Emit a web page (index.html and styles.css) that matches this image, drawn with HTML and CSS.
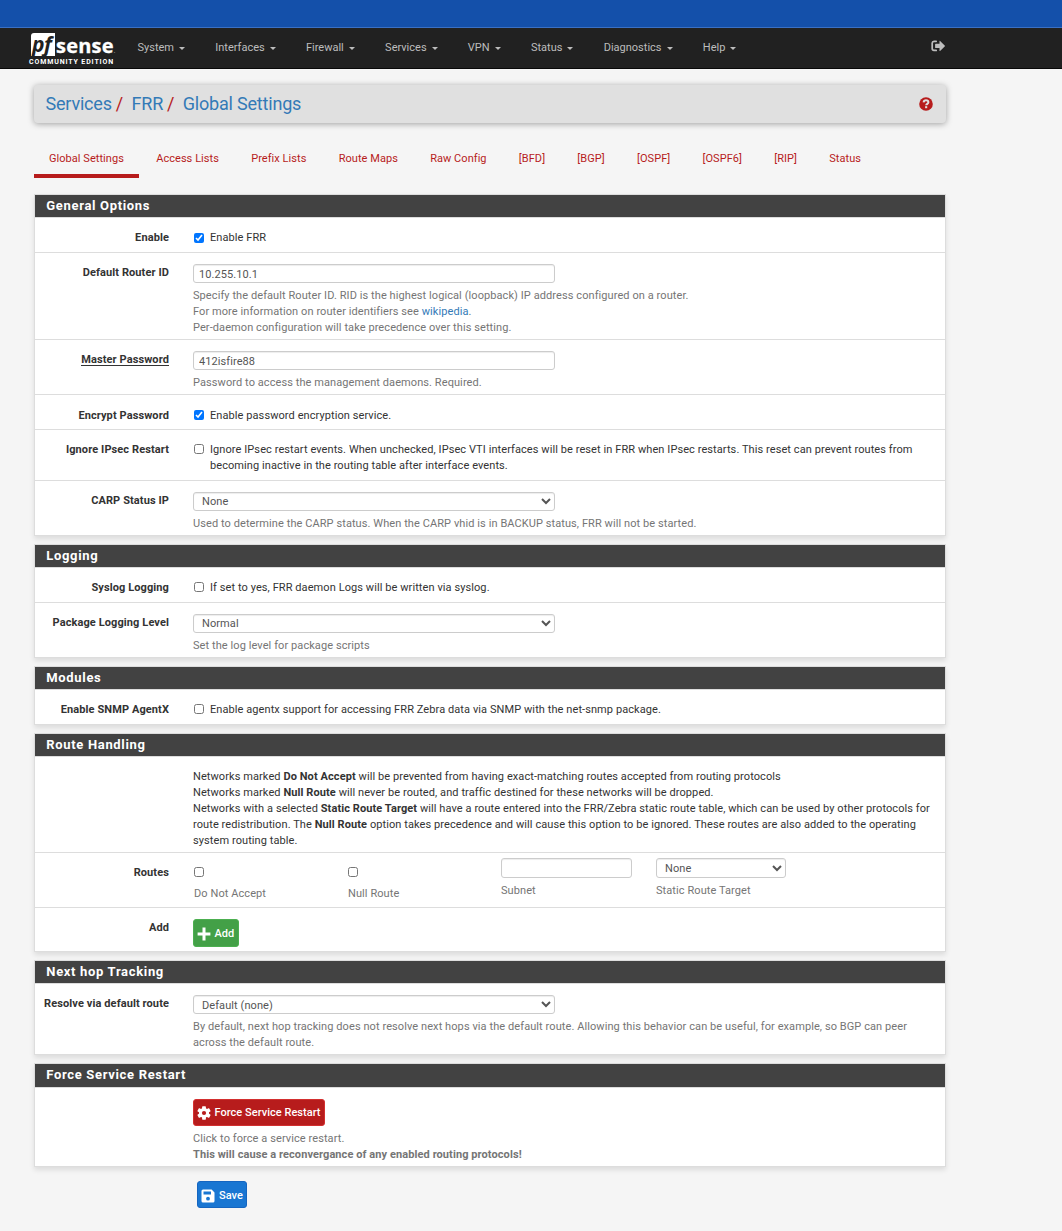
FILE: index.html
```html
<!DOCTYPE html>
<html lang="en">
<head>
<meta charset="utf-8">
<title>Services: FRR: Global Settings</title>
<link rel="stylesheet" href="styles.css">
</head>
<body>
<div class="banner"></div>
<nav class="navbar">
  <div class="brand">
    <div class="brand-name"><span class="brand-box">pf</span><span class="brand-word">sense</span><span class="brand-dot">.</span></div>
    <div class="brand-edition">COMMUNITY EDITION</div>
  </div>
  <ul class="menu">
    <li>System<i class="caret"></i></li>
    <li>Interfaces<i class="caret"></i></li>
    <li>Firewall<i class="caret"></i></li>
    <li>Services<i class="caret"></i></li>
    <li>VPN<i class="caret"></i></li>
    <li>Status<i class="caret"></i></li>
    <li>Diagnostics<i class="caret"></i></li>
    <li>Help<i class="caret"></i></li>
  </ul>
  <svg class="logout" viewBox="0 0 14 12" width="14" height="12"><path d="M5.2 1.3H3A1.8 1.8 0 0 0 1.2 3v5.6A1.8 1.8 0 0 0 3 10.4h2.2" fill="none" stroke="currentColor" stroke-width="1.7" stroke-linecap="round"/><path d="M4.7 3.8h3.8V1.1q0-.7.6-.2l4.6 4.5q.5.5 0 1L9.1 10.9q-.6.5-.6-.2V8H4.7q-.6 0-.6-.6v-3q0-.6.6-.6z" fill="currentColor"/></svg>
</nav>

<main class="container">
  <header class="page-head">
    <div class="crumbs"><a>Services</a><b>/</b><a>FRR</a><b>/</b><a>Global Settings</a></div>
    <svg class="help-icon" viewBox="0 0 14 14" width="14" height="14"><circle cx="7" cy="7" r="6.8" fill="#b71c1c"/><path d="M4.6 5.3C4.8 3.9 5.7 3.3 7 3.3c1.4 0 2.4.8 2.4 2 0 1.5-2.2 1.5-2.2 3" fill="none" stroke="#e0e0e0" stroke-width="2"/><rect x="6.1" y="9.2" width="2.1" height="2" fill="#e0e0e0"/></svg>
  </header>

  <ul class="tabs">
    <li class="active">Global Settings</li><li>Access Lists</li><li>Prefix Lists</li><li>Route Maps</li><li>Raw Config</li><li>[BFD]</li><li>[BGP]</li><li>[OSPF]</li><li>[OSPF6]</li><li>[RIP]</li><li>Status</li>
  </ul>

  <section class="panel">
    <h2>General Options</h2>
    <div class="row h35 first"><label>Enable</label><div class="field"><div class="check"><input type="checkbox" checked><span>Enable FRR</span></div></div></div>
    <div class="row h87"><label>Default Router ID</label><div class="field"><input class="control" type="text" value="10.255.10.1">
      <p class="hint">Specify the default Router ID. RID is the highest logical (loopback) IP address configured on a router.<br>For more information on router identifiers see <a>wikipedia</a>.<br>Per-daemon configuration will take precedence over this setting.</p></div></div>
    <div class="row h55"><label><span class="required">Master Password</span></label><div class="field"><input class="control" type="text" value="412isfire88">
      <p class="hint">Password to access the management daemons. Required.</p></div></div>
    <div class="row h35 low"><label>Encrypt Password</label><div class="field"><div class="check"><input type="checkbox" checked><span>Enable password encryption service.</span></div></div></div>
    <div class="row h51"><label>Ignore IPsec Restart</label><div class="field"><div class="check"><input type="checkbox"><span>Ignore IPsec restart events. When unchecked, IPsec VTI interfaces will be reset in FRR when IPsec restarts. This reset can prevent routes from<br>becoming inactive in the routing table after interface events.</span></div></div></div>
    <div class="row h54"><label>CARP Status IP</label><div class="field"><select class="control"><option>None</option></select>
      <p class="hint">Used to determine the CARP status. When the CARP vhid is in BACKUP status, FRR will not be started.</p></div></div>
  </section>

  <section class="panel">
    <h2>Logging</h2>
    <div class="row h35"><label>Syslog Logging</label><div class="field"><div class="check"><input type="checkbox"><span>If set to yes, FRR daemon Logs will be written via syslog.</span></div></div></div>
    <div class="row h54"><label>Package Logging Level</label><div class="field"><select class="control"><option>Normal</option></select>
      <p class="hint">Set the log level for package scripts</p></div></div>
  </section>

  <section class="panel">
    <h2>Modules</h2>
    <div class="row h34"><label>Enable SNMP AgentX</label><div class="field"><div class="check"><input type="checkbox"><span>Enable agentx support for accessing FRR Zebra data via SNMP with the net-snmp package.</span></div></div></div>
  </section>

  <section class="panel">
    <h2>Route Handling</h2>
    <div class="row h96"><label></label><div class="field">Networks marked <b>Do Not Accept</b> will be prevented from having exact-matching routes accepted from routing protocols<br>Networks marked <b>Null Route</b> will never be routed, and traffic destined for these networks will be dropped.<br>Networks with a selected <b>Static Route Target</b> will have a route entered into the FRR/Zebra static route table, which can be used by other protocols for<br>route redistribution. The <b>Null Route</b> option takes precedence and will cause this option to be ignored. These routes are also added to the operating<br>system routing table.</div></div>
    <div class="row h55"><label>Routes</label><div class="field routes">
      <div class="route-check"><input type="checkbox"><span>Do Not Accept</span></div>
      <div class="route-check"><input type="checkbox"><span>Null Route</span></div>
      <div class="route-input"><input class="control" type="text"><span>Subnet</span></div>
      <div class="route-input"><select class="control"><option>None</option></select><span>Static Route Target</span></div>
    </div></div>
    <div class="row h43"><label>Add</label><div class="field"><button class="btn add"><svg viewBox="0 0 14 14" width="14" height="14"><path d="M7 .6v12.800M.6 7h12.800" stroke="#fff" stroke-width="3"/></svg>Add</button></div></div>
  </section>

  <section class="panel">
    <h2>Next hop Tracking</h2>
    <div class="row h70"><label>Resolve via default route</label><div class="field"><select class="control lowered"><option>Default (none)</option></select>
      <p class="hint">By default, next hop tracking does not resolve next hops via the default route. Allowing this behavior can be useful, for example, so BGP can peer<br>across the default route.</p></div></div>
  </section>

  <section class="panel">
    <h2 class="tall">Force Service Restart</h2>
    <div class="row h78"><label></label><div class="field"><button class="btn danger"><svg viewBox="0 0 14 14" width="14" height="14"><g fill="#fff"><rect x="5.1" y="0.2" width="3.8" height="13.6" rx=".7"/><rect x="5.1" y="0.2" width="3.8" height="13.6" rx=".7" transform="rotate(60 7 7)"/><rect x="5.1" y="0.2" width="3.8" height="13.6" rx=".7" transform="rotate(120 7 7)"/><circle cx="7" cy="7" r="5.1"/></g><circle cx="7" cy="7" r="2.1" fill="#b71c1c"/></svg>Force Service Restart</button>
      <p class="hint">Click to force a service restart.<br><b>This will cause a reconvergance of any enabled routing protocols!</b></p></div></div>
  </section>

  <div class="actions"><button class="btn save"><svg viewBox="0 0 14 14" width="14" height="14"><path d="M2 .5h8.6L13.5 3.4V12a1.5 1.5 0 0 1-1.5 1.5H2A1.5 1.5 0 0 1 .5 12V2A1.5 1.5 0 0 1 2 .5z" fill="#fff"/><rect x="2.5" y="2.5" width="7.5" height="3" fill="#1976d2"/><circle cx="7" cy="9.7" r="1.9" fill="#1976d2"/></svg>Save</button></div>
</main>
</body>
</html>
```
FILE: styles.css
```css
* { box-sizing: border-box; }
body {
  margin: 0;
  background: #f5f5f5;
  color: #333;
  font: 11px/16px Roboto, "Liberation Sans", sans-serif;
  letter-spacing: 0.082px;
}
ul { list-style: none; margin: 0; padding: 0; }
a { color: #337ab7; }

.banner { height: 28px; background: #1450aa; border-bottom: 1px solid #3a70c4; }

.navbar {
  display: flex;
  height: 41px;
  background: #212121;
  border-bottom: 1px solid #080808;
  color: #bdbdbd;
}
.brand { width: 108px; padding: 5px 0 0 30px; color: #fff; }
.brand-name { display: flex; height: 23px; }
.brand-box {
  flex: none;
  width: 24px;
  margin-left: 1px;
  padding-left: 1px;
  border-radius: 3px 0 0 0;
  background: #fff;
  color: #212121;
  font: italic 700 21px/23px "Open Sans", sans-serif;
  letter-spacing: -0.5px;
}
.brand-word { margin-left: 1px; font: 700 20px/25px "Open Sans", sans-serif; letter-spacing: 0.2px; -webkit-text-stroke: 0.3px #fff; }
.brand-dot { font: 6px/36px Roboto, sans-serif; }
.brand-edition { margin: 2px 0 0 -1px; font: 700 7px/8px Roboto, sans-serif; letter-spacing: 0.87px; white-space: nowrap; }
.menu { display: flex; gap: 30.3px; padding: 11px 0 0 29.5px; letter-spacing: 0; }
.menu li { display: flex; align-items: center; height: 17px; }
.caret { margin: 2px 0 0 5px; border: 3px solid transparent; border-top-color: currentColor; border-bottom: 0; }
.logout { margin: 12px 117px 0 auto; }

.container { width: 912px; margin-left: 34px; padding-top: 16px; }

.page-head {
  display: flex;
  align-items: center;
  justify-content: space-between;
  height: 38px;
  padding: 0 13px 0 11.5px;
  border-radius: 4px;
  background: #e0e0e0;
  box-shadow: 0 1px 6px rgba(0, 0, 0, 0.35);
}
.crumbs { font-size: 18px; line-height: 20px; letter-spacing: -0.2px; }
.crumbs b { margin: 0 8.5px 0 4px; color: #b71c1c; font-weight: 400; }

.tabs { display: flex; gap: 2.25px; height: 55px; margin-bottom: 16px; color: #b71c1c; letter-spacing: 0.05px; }
.tabs li { padding: 28px 15px 0; }
.tabs .active { border-bottom: 4px solid #b71c1c; }

.panel {
  margin-bottom: 8px;
  border: 1px solid #ddd;
  background: #fff;
  box-shadow: 0 3px 5px rgba(0, 0, 0, 0.1);
}
.panel h2 {
  height: 23px;
  margin: 0;
  padding-left: 11.3px;
  border-bottom: 1px solid #ddd;
  background: #424242;
  color: #fff;
  font-size: 13px;
  font-weight: 700;
  line-height: 21px;
  letter-spacing: 0.67px;
}
.panel h2.tall { height: 24px; }

.row { display: grid; grid-template-columns: 134px 752px; gap: 24px; padding-top: 12px; border-bottom: 1px solid #ddd; }
.row:last-child { border-bottom: 0; }
.row.low { padding-top: 13px; }
.row > label { font-weight: 700; text-align: right; white-space: nowrap; letter-spacing: 0.1px; }
.required { display: inline-block; height: 14px; border-bottom: 1px solid #333; }
.field { white-space: nowrap; }
.h34 { height: 34px; }
.h35 { height: 35px; }
.h43 { height: 43px; }
.h51 { height: 51px; }
.h54 { height: 54px; }
.h55 { height: 55px; }
.h70 { height: 70px; }
.h78 { height: 78px; }
.h87 { height: 87px; }
.h96 { height: 96px; }

input[type="checkbox"] { display: block; flex: none; width: 10px; height: 10px; margin: 2px 6px 0 1px; }
.first input[type="checkbox"] { margin-top: 3px; }
.check { display: flex; }
.control {
  display: block;
  width: 362px;
  height: 19px;
  margin: -1px 0 0;
  padding: 1px 5px 0;
  border: 1px solid #ccc;
  border-radius: 3px;
  background: #fff;
  box-shadow: inset 0 1px 1px rgba(0, 0, 0, 0.075);
  color: #555;
  font: inherit;
  letter-spacing: inherit;
}
select.control { padding: 0 0 0 4px; }
select.lowered { padding-top: 1px; }
.hint { margin: 5px 0 0; color: #757575; }

.routes { display: grid; grid-template-columns: 154px 154px 155px 130px; color: #757575; }
.route-check span { display: block; margin-left: 1px; }
.route-check input[type="checkbox"] { margin-bottom: 9px; }
.route-input { margin-top: -6px; }
.route-input .control { width: 131px; height: 20px; margin-bottom: 5px; }
.route-input select.control { width: 130px; }
.route-input span { display: block; }

.btn {
  display: flex;
  align-items: center;
  gap: 3.5px;
  height: 27px;
  padding: 0 3px;
  border: 1px solid;
  border-radius: 3px;
  color: #fff;
  font: 500 11px/16px Roboto, sans-serif;
  letter-spacing: 0.03px;
}
.field .btn { margin-top: -1px; }
.add { width: 46px; height: 28px; padding: 1px 3px 0; background: #43a047; border-color: #4caf50; }
.danger { background: #b71c1c; border-color: #d32f2f; }
.save { width: 50px; padding-top: 2px; gap: 4px; background: #1976d2; border-color: #1565c0; }
.actions { margin-top: 14px; padding-left: 163px; }
```
